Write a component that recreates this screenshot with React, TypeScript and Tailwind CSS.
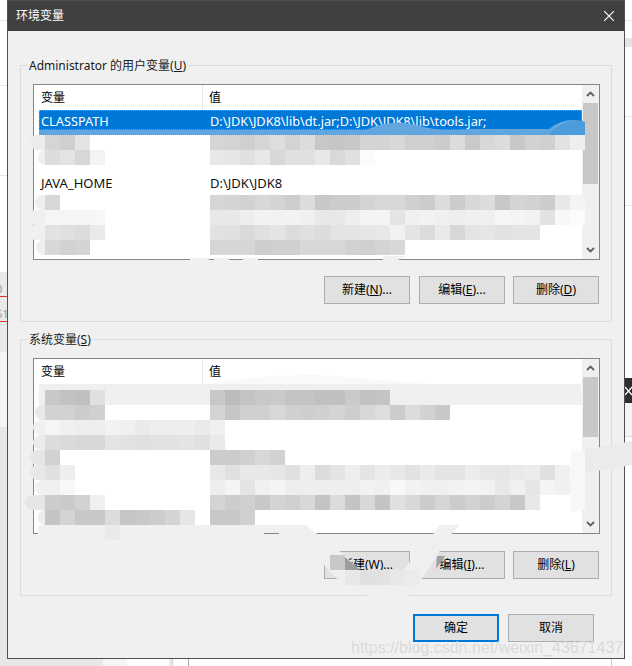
type MosaicRowData = {
  name?: string;
  value?: string;
  lead?: number;
  leadTone?: string;
  band?: boolean;
};

// cell shades are written as the two hex digits of a grey
const userRows: MosaicRowData[] = [
  {
    name: "d5 cf e4",
    value: "d5 d3 cf d6 dd d3 dc c8 c6 c8 d4 d4 d8 cf d0 cc dc c9 d8 dc c8 d2 d0 e2 ee",
    lead: 15,
    leadTone: "ececec",
  },
  {
    name: "dc e3 d7 f3",
    value: "e8 e6 e0 e8 d8 e0 e0 e8 d9 e0 fb",
    lead: 7,
    leadTone: "efefef",
  },
];

const userRowsLower: MosaicRowData[] = [
  {
    name: "d8",
    value: "d6 d4 d2 d8 d4 ce dc c8 cc cc d4 d8 d8 d0 cc dc cc d8 dc c8 d4 d2 cc e8 f4",
    lead: 10,
    leadTone: "eeeeee",
  },
  {
    name: "f5 f5 f5 f7",
    value: "e8 e8 ee f2 f2 f2 f0 e8 e8 ee f4 f4 e4 f0 f2 f0 ee f0 f0 f6 f4 f2 e2 f8 fb",
    lead: 17,
    leadTone: "f0f0f0",
  },
  {
    name: "e2 e0 dc ea",
    value: "e2 e0 da e0 e4 dc e0 dc e4 e4 e6 e8 f2 e4 dc ea d8 e4 e6 e2 e4 e4",
    lead: 17,
    leadTone: "f0f0f0",
  },
  {
    name: "d8 d2 d4",
    value: "d6 d6 d6 ce d0 d0 d8 d8 d8 d2 d0 d4 d8",
    lead: 9,
    leadTone: "eeeeee",
  },
];

const systemRows: MosaicRowData[] = [
  {
    name: "c8 c2 c0 e0",
    value: "c8 bc c4 c8 ca c4 c4 c0 c0 ca c2 c4",
    lead: 7,
    leadTone: "f0f0f0",
    band: true,
  },
  {
    name: "d2 d2 cc d0",
    value: "d4 c6 d0 d0 d8 d0 ce d0 d4 ce d8 de cc dc d2 c8",
    lead: 10,
    leadTone: "e8e8e8",
  },
  {
    name: "f5 f0 ee ee f2 f0 ea ee ee ee ea f8",
    value: "f0",
    lead: 12,
    leadTone: "f0f0f0",
  },
  {
    name: "dc da d8 d8 e4 e2 e0 e2 e2 e4 e0 f2",
    value: "ea",
    lead: 12,
    leadTone: "ececec",
  },
  { name: "d2", value: "cc cc d0 d8 d2", lead: 15, leadTone: "e6e6e6" },
  {
    name: "e0 ee",
    value: "e8 e0 e8 e8 e6 e0 ee dc e4 ee e4 ec e8 e2 ea e4 e4 ec e8 e6 ea ec e0 f0 fa",
    lead: 15,
    leadTone: "e8e8e8",
  },
  {
    name: "f0 f8",
    value: "ee f4 e4 f0 f4 ee ee ee ee ee f2 f0 f8 f2 f0 f0 f2 f4 f2 e8 f0 e6 f4 f0 f8",
    lead: 10,
    leadTone: "f0f0f0",
  },
  {
    name: "cc ca d2 f0",
    value: "d4 cc d0 c8 d4 d0 d8 c4 dc c4 d8 c4 e0 d8 cc d6 cc d2 cc d4 c8 e8",
    lead: 20,
    leadTone: "e6e6e6",
  },
  {
    name: "c4 d4 c8 c8 dc c6 c8 cc d4 e6",
    value: "c8 c8 d0",
    lead: 7,
    leadTone: "ececec",
  },
];

function Cells({ shades }: { shades?: string }) {
  if (!shades) return null;
  return (
    <>
      {shades.split(" ").map((g, i) => (
        <span
          key={i}
          className="h-[15px] w-[15px] shrink-0"
          style={{ backgroundColor: `#${g}${g}${g}` }}
        />
      ))}
    </>
  );
}

function MosaicRow({ row }: { row: MosaicRowData }) {
  return (
    <div className="relative grid h-[15px] w-[548px] grid-cols-[176px_372px]">
      {row.band && <span className="absolute inset-y-0 left-[5px] right-0 bg-[#f0f0f0]" />}
      {row.lead ? (
        <span
          className="absolute inset-y-0 rounded-l-full"
          style={{ left: 11 - row.lead, width: row.lead, backgroundColor: `#${row.leadTone}` }}
        />
      ) : null}
      <div className="relative flex pl-[11px]">
        <Cells shades={row.name} />
      </div>
      <div className="relative flex">
        <Cells shades={row.value} />
      </div>
    </div>
  );
}

function Arrow({ up }: { up?: boolean }) {
  return (
    <svg width="9" height="6" viewBox="0 0 9 6" className={up ? "" : "rotate-180"}>
      <path d="M1 5 L4.5 1.5 L8 5" fill="none" stroke="#606060" strokeWidth="1.8" />
    </svg>
  );
}

function ScrollBar({ thumb }: { thumb: string }) {
  return (
    <div className="flex w-[17px] flex-col bg-[#f0f0f0]">
      <div className="flex h-[18px] items-center justify-center">
        <Arrow up />
      </div>
      <div className={`mx-px bg-[#c8c8c8] ${thumb}`} />
      <div className="flex-1" />
      <div className="flex h-[18px] items-center justify-center">
        <Arrow />
      </div>
    </div>
  );
}

function VarList({ thumb, children }: { thumb: string; children: React.ReactNode }) {
  return (
    <div className="ml-3 flex h-[176px] w-[567px] border border-[#82878c] bg-white">
      <div className="w-[548px]">
        <div className="flex h-[25px] text-black">
          <div className="flex w-[169px] items-center border-r border-[#e5e5e5] pl-[7px]">变量</div>
          <div className="flex items-center pl-[6px]">值</div>
        </div>
        {children}
      </div>
      <ScrollBar thumb={thumb} />
    </div>
  );
}

function WinButton({
  children,
  primary,
  className = "",
}: {
  children: React.ReactNode;
  primary?: boolean;
  className?: string;
}) {
  return (
    <button
      type="button"
      className={`flex h-[28px] w-[86px] items-center justify-center bg-[#e1e1e1] text-black ${
        primary ? "border-2 border-[#0078d7]" : "border border-[#adadad]"
      } ${className}`}
    >
      {children}
    </button>
  );
}

function Group({ legend, children }: { legend: React.ReactNode; children: React.ReactNode }) {
  return (
    <fieldset className="ml-3 h-[265px] w-[592px] border border-[#dcdcdc]">
      <legend className="ml-[7px] h-4 px-px leading-[18px] text-[#1a1a1a]">{legend}</legend>
      {children}
    </fieldset>
  );
}

function Line() {
  return <div className="h-px bg-[#e6e6e6]" />;
}

export default function App() {
  return (
    <div className="relative h-[666px] w-[632px] overflow-hidden bg-white text-[12px] [font-family:'Noto_Sans','Noto_Sans_CJK_SC',sans-serif]">
      <div className="flex h-[659px]">
        {/* what shows of the page behind the dialog */}
        <div className="flex w-[7px] flex-col text-[11px] leading-[14px] text-[#9a9a9a]">
          <div className="h-5" />
          <Line />
          <div className="h-16" />
          <Line />
          <div className="h-[89px]" />
          <Line />
          <div className="h-[96px]" />
          <div className="h-[80px] overflow-hidden bg-[#e9e9e9] pt-[10px]">
            <div className="-ml-1 border-b border-[#e03030]">0</div>
            <div className="-ml-1 mt-[10px] whitespace-nowrap border-b border-[#e03030]">61</div>
          </div>
          <div className="h-[75px] bg-[#f5f5f5]" />
          <div className="flex-1 bg-[#e7e7e7]" />
        </div>

        <div className="flex h-[659px] w-[618px] flex-col border border-[#4f4f4f] bg-[#f0f0f0]">
          <div className="flex h-[30px] shrink-0 items-center justify-between bg-[#404040] pl-2 pr-[10px] text-white">
            <span>环境变量</span>
            <svg width="10" height="10" viewBox="0 0 10 10">
              <path d="M0 0 L10 10 M10 0 L0 10" stroke="#fff" strokeWidth="1.1" />
            </svg>
          </div>

          <div className="mt-[26px]">
            <Group legend={<>Administrator 的用户变量(<u>U</u>)</>}>
              <div className="mt-[11px]">
                <VarList thumb="h-[81px]">
                  <div className="ml-[5px] grid h-5 w-[543px] grid-cols-[169px_1fr] items-center border border-dotted border-[#e08a3c] bg-[#0078d7] pl-px pt-px text-[12.75px] text-white">
                    <span>CLASSPATH</span>
                    <span className="whitespace-nowrap">D:\JDK\JDK8\lib\dt.jar;D:\JDK\JDK8\lib\tools.jar;</span>
                  </div>
                  <div className="h-[5px]" />
                  {userRows.map((row, i) => (
                    <MosaicRow key={i} row={row} />
                  ))}
                  <div className="grid h-[30px] grid-cols-[176px_1fr] items-end pb-1 text-[13px] leading-4 text-[#111]">
                    <span className="pl-[7px]">JAVA_HOME</span>
                    <span>D:\JDK\JDK8</span>
                  </div>
                  {userRowsLower.map((row, i) => (
                    <MosaicRow key={i} row={row} />
                  ))}
                </VarList>
              </div>
              <div className="ml-[303px] mt-4 flex gap-2">
                <WinButton className="mr-px">新建(<u>N</u>)...</WinButton>
                <WinButton>编辑(<u>E</u>)...</WinButton>
                <WinButton>删除(<u>D</u>)</WinButton>
              </div>
            </Group>
          </div>

          <div className="mt-[9px]">
            <Group legend={<>系统变量(<u>S</u>)</>}>
              <div className="mt-[11px]">
                <VarList thumb="h-[60px]">
                  <div className="h-[6px]" />
                  {systemRows.map((row, i) => (
                    <MosaicRow key={i} row={row} />
                  ))}
                </VarList>
              </div>
              <div className="ml-[303px] mt-[17px] flex gap-2">
                <WinButton className="mr-px">新建(<u>W</u>)...</WinButton>
                <WinButton>编辑(<u>I</u>)...</WinButton>
                <WinButton>删除(<u>L</u>)</WinButton>
              </div>
            </Group>
          </div>

          <div className="ml-[405px] mt-[18px] flex gap-[9px]">
            <WinButton primary>确定</WinButton>
            <WinButton>取消</WinButton>
          </div>
        </div>

        <div className="flex w-[7px] flex-col">
          <div className="h-5" />
          <Line />
          <div className="h-[17px]" />
          <div className="h-[9px] bg-[#e4e4e4]" />
          <div className="h-[69px]" />
          <Line />
          <div className="h-[88px]" />
          <Line />
          <div className="h-[172px]" />
          <div className="flex h-[25px] items-center bg-[#2e2e2e]">
            <svg width="7" height="10" viewBox="0 0 7 10">
              <path d="M0 1 L7 9 M7 1 L0 9" stroke="#fff" strokeWidth="1.2" />
            </svg>
          </div>
          <div className="h-[34px] border-b border-[#dcdcdc] bg-[#f4f4f4]" />
        </div>
      </div>

      <div className="flex h-[7px]">
        <div className="w-[103px] bg-[#e7e7e7]" />
        <div className="w-6 bg-[#f5f5f5]" />
        <div className="w-[42px]" />
        <div className="w-1 border-r border-[#cccccc] bg-[#e8e8e8]" />
        <div className="w-4 border-r border-[#aaaaaa]" />
        <div className="ml-[422px] w-px bg-[#cccccc]" />
      </div>

      {/* hand-painted smudges that hide parts of the window */}
      <svg className="pointer-events-none absolute inset-0" width="632" height="666" viewBox="0 0 632 666">
        <path
          d="M39 130 H366 Q392 118 420 126 Q440 132 470 129 H549 Q565 116 585 122 V135 H39 Z"
          fill="#62a6df"
        />
        <path d="M549 135 Q565 116 585 122 V135 Z" fill="#4c9cdc" />
        <path d="M190 258 H209 V260 H190 Z M214 258 H229 V260 H214 Z M243 258 H258 V260 H243 Z M383 256 H406 L398 260 H383 Z" fill="#f0f0f0" />
        <path d="M210 384 Q260 374 320 375 L430 384 H581 V390 H210 Z" fill="#f9f9f9" />
        <path d="M39 384 H581 V390 H39 Z" fill="#efefef" />
        <path d="M585 450 L632 441 V465 L585 473 Z" fill="#ebebeb" />
        <path d="M571 451 H585 V510 L571 512 Z" fill="#f7f7f7" />
        <path d="M38 525 H264 V540 H38 Z M264 525 H279 V533 H264 Z M279 525 H305 V540 H279 Z" fill="#eff0f0" />
        <rect x="105" y="525" width="15" height="15" fill="#e9ebeb" />
        <path
          d="M305 525 L316 533 L345 555 L360 572 L400 574 L409 563 L434 533 L440 525 L460 525 L446 540 L437 556 L428 570 L408 597 L370 597 L340 582 L300 540 Z"
          fill="#efefef"
        />
        <rect x="330" y="555" width="15" height="15" fill="#c8c8c8" />
        <path d="M345 557 L360 570 H345 Z" fill="#9c9c9c" />
        <rect x="345" y="570" width="15" height="15" fill="#e8e8e8" />
        <rect x="360" y="570" width="15" height="15" fill="#e0e0e0" />
        <rect x="375" y="570" width="15" height="15" fill="#e2e2e2" />
        <rect x="390" y="570" width="15" height="15" fill="#e8e8e8" />
        <rect x="405" y="570" width="15" height="15" fill="#ebebeb" />
        <path d="M437 556 H445 L436 569 Z" fill="#a0a0a0" />
      </svg>

      <div className="absolute left-[351px] top-[638px] whitespace-nowrap text-[16px] leading-5 text-[#d4d4d4]/80 [font-family:'Liberation_Sans',sans-serif]">
        https://blog.csdn.net/weixin_43671437
      </div>
    </div>
  );
}
